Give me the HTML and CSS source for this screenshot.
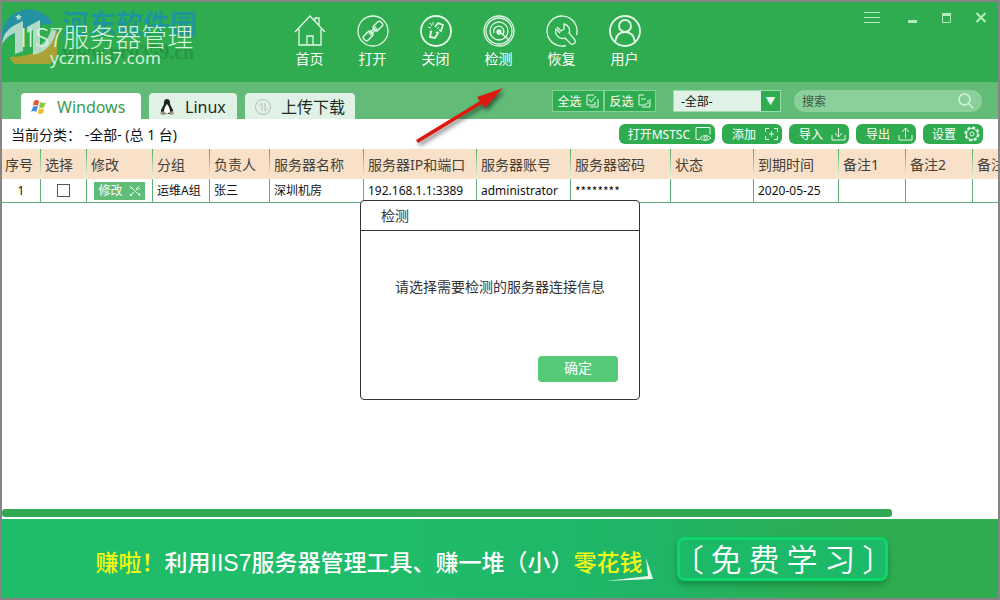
FILE: index.html
```
<!DOCTYPE html>
<html lang="zh-CN">
<head>
  <meta charset="UTF-8">
  <meta name="viewport" content="width=device-width, initial-scale=1.0">
  <title>IIS7服务器管理</title>
  <link rel="stylesheet" href="styles.css">
</head>
<body>
  <div class="window">
    <header class="header">
      <div class="brand">
        <h1>IIS7服务器管理</h1>
        <span class="brand-url">yczm.iis7.com</span>
      </div>
      <nav class="nav">
        <button>
          <svg viewBox="0 0 32 32"><path d="M1 17 16 1l15 16M5 14v16h22V14M13 30V21h6v9M21 6V3h4v7"/></svg>
          首页
        </button>
        <button>
          <svg viewBox="0 0 32 32"><circle cx="16" cy="16" r="15"/><g transform="rotate(-45 16 16)"><rect x="4" y="13" width="10" height="6" rx="2"/><rect x="18" y="13" width="10" height="6" rx="2"/><path d="M11 15h10M11 17h10"/></g></svg>
          打开
        </button>
        <button>
          <svg class="bold" viewBox="0 0 32 32"><circle cx="16" cy="16" r="15"/><path d="m15 12 3-4 5 2-2 6-2-1M10 17l2-1M16 17l2 1-3 5-5-1 1-5"/><path class="thin" d="M8 12l3 1M10 8l2 3M13 7v3M19 12l-2 2"/></svg>
          关闭
        </button>
        <button>
          <svg viewBox="0 0 32 32"><circle cx="16" cy="16" r="15"/><circle cx="16" cy="16" r="13"/><circle cx="16" cy="16" r="9"/><path d="M11 18a5 5 0 1 1 8 2M17 17l9 8"/><circle class="dot" cx="16" cy="17" r="2"/></svg>
          检测
        </button>
        <button>
          <svg viewBox="0 0 32 32"><path d="M20 30.500A15 15 0 1 1 30.500 20M11 12l4 4 3-2v-5a6.500 6.500 0 0 1 5 9l6 7a3 3 0 0 1-4 4l-6-6a7 7 0 0 1-9-9l4 4"/></svg>
          恢复
        </button>
        <button>
          <svg class="bold" viewBox="0 0 32 32"><circle cx="16" cy="16" r="15"/><circle cx="16" cy="11" r="6"/><path d="M6 27c1-6 4-10 10-10s9 4 10 10"/></svg>
          用户
        </button>
      </nav>
      <div class="controls">
        <button aria-label="菜单"><svg width="16" height="14"><path d="M0 3.500h16M0 8.500h16M0 13.500h16"/></svg></button>
        <button aria-label="最小化"><svg width="10" height="14"><path class="thick" d="M0 12.500h9"/></svg></button>
        <button aria-label="最大化"><svg width="10" height="14"><path d="M.5 5v8.500h8V5"/><path class="thick" d="M0 5.500h9"/></svg></button>
        <button aria-label="关闭窗口"><svg width="10" height="14"><path class="cross" d="m.5 4 9 9M9.500 4l-9 9"/></svg></button>
      </div>
    </header>

    <div class="tabbar">
      <div class="tabs">
        <button class="tab active">
          <svg width="18" height="18" viewBox="0 0 18 18"><path fill="#e2572f" d="M4 3q3-2 5 0L8 8Q5 6 3 8z"/><path fill="#8cc63e" d="M10 4q3 2 6 0l-2 5q-3 2-5 0z"/><path fill="#3f8fe0" d="M3 9q3-2 5 0l-2 5q-2-2-5 0z"/><path fill="#f7bd28" d="M9 10q2 2 5 0l-1 5q-3 2-5 0z"/></svg>
          Windows
        </button>
        <button class="tab">
          <svg width="18" height="18" viewBox="0 0 16 18"><path fill="#1c2420" d="M8 1c3 0 3 3 3 5l3 6v4H2v-4l3-6c0-2 0-5 3-5z"/><path fill="#fff" d="M8 6c2 2 3 5 3 8l-3 2-3-2c0-3 1-6 3-8z"/><path fill="#9b927d" d="m2 14 3-1 2 3-2 1-4-1zM14 13l1 3-4 1-1-3z"/></svg>
          Linux
        </button>
        <button class="tab">
          <svg width="18" height="18" viewBox="0 0 18 18" fill="none" stroke="#b5c0b8"><circle cx="9" cy="9" r="7.500"/><path d="M8 13V5L5 8M11 5v8l3-3"/></svg>
          上传下载
        </button>
      </div>
      <div class="filters">
        <div class="pick">
          <button>全选<svg width="13" height="14"><path d="M8 1H1v10h8V8M3 5l2 3 5-6M12 5v8H4"/></svg></button>
          <button>反选<svg width="13" height="14"><path d="M6 1H1v10h7V9M3 5h5M12 5v8H4M10 6v4"/></svg></button>
        </div>
        <div class="select">
          <select aria-label="分组"><option>-全部-</option></select>
        </div>
        <div class="search">
          <input type="text" placeholder="搜索" aria-label="搜索">
          <svg width="16" height="16"><circle cx="6.500" cy="6.500" r="5.500"/><path d="m11 11 4 4"/></svg>
        </div>
      </div>
    </div>

    <div class="toolbar">
      <span class="current">当前分类： -全部- (总 1 台)</span>
      <div class="actions">
        <button class="wide">打开MSTSC<svg width="17" height="14"><path d="M5 12.500H1V.5h14v7M5 11q5-5 11 0-6 5-11 0z"/><circle cx="10.500" cy="11" r="1.500"/></svg></button>
        <button>添加<svg width="15" height="14"><path d="M5 1.500H1.500V5M10 1.500h3.500V5M1.500 9v3.500H5M13.500 9v3.500H10M5 7h5M7.500 4.500v5"/></svg></button>
        <button>导入<svg width="15" height="14"><path d="M1 8v5h13V8M7.500 1v9M4 6l3.500 4L11 6"/></svg></button>
        <button>导出<svg width="15" height="14"><path d="M1 8v5h13V8M7.500 11V1M4 5l3.500-4L11 5"/></svg></button>
        <button>设置<svg width="16" height="16"><circle class="gear" cx="8" cy="8" r="6.500"/><circle cx="8" cy="8" r="5.500"/><circle cx="8" cy="8" r="2"/></svg></button>
      </div>
    </div>

    <main class="list">
      <table>
        <colgroup>
          <col class="c-no"><col class="c-check"><col class="c-edit"><col class="c-group"><col class="c-owner"><col class="c-name"><col class="c-ip"><col class="c-name"><col class="c-pwd"><col class="c-state"><col class="c-date"><col class="c-note"><col class="c-note"><col class="c-last">
        </colgroup>
        <thead>
          <tr>
            <th>序号</th><th>选择</th><th>修改</th><th>分组</th><th>负责人</th><th>服务器名称</th><th>服务器IP和端口</th><th>服务器账号</th><th>服务器密码</th><th>状态</th><th>到期时间</th><th>备注1</th><th>备注2</th><th>备注3</th>
          </tr>
        </thead>
        <tbody>
          <tr>
            <td class="center">1</td>
            <td class="center"><input type="checkbox" aria-label="选择深圳机房"></td>
            <td class="center"><button class="edit">修改<svg width="12" height="12"><path d="m2 2 9 9M10 1 7 4l1 1 3-2M1 11l4-4M1 1l2 3M1 9l2 2M10 8l1 2"/></svg></button></td>
            <td>运维A组</td>
            <td>张三</td>
            <td>深圳机房</td>
            <td>192.168.1.1:3389</td>
            <td>administrator</td>
            <td class="password">********</td>
            <td></td>
            <td>2020-05-25</td>
            <td></td>
            <td></td>
            <td></td>
          </tr>
        </tbody>
      </table>
    </main>
    <div class="scroll"><div class="thumb"></div></div>

    <footer class="banner">
      <p class="slogan">
        <em>赚啦！</em>利用IIS7服务器管理工具、赚一堆（小）<em>零花钱</em>
        <svg class="corner" width="48" height="24"><path d="m40 0 7 21L0 23l42-5z"/></svg>
      </p>
      <a class="learn" href="#">〔 免 费 学 习 〕</a>
    </footer>

    <div class="watermark">
      <svg width="56" height="58" viewBox="0 0 56 58">
        <path fill="#2590ad" d="M1 28A27 27 0 0 1 52 18Q25 18 1 36z"/>
        <path fill="#b8a233" d="M8 51Q42 52 55 24A27 27 0 0 1 8 51z"/>
        <path fill="#bfe0d2" d="M1 38Q2 26 12 20l10-5v30l-8 3V27Q7 29 1 38zM26 21l13-7v25q8-4 11-15 4-1 5 1-4 20-23 24V24l-6 3z"/>
        <path fill="#bfe0d2" d="m18 8 1 2h2l-2 2 1 2-2-1-2 1v-2l-2-2h2z"/>
      </svg>
      <div class="mark-text">
        <b>河东软件园</b>
        <span>www.pc0359.cn</span>
      </div>
    </div>

    <svg class="pointer" width="96" height="62">
      <path d="m4 54 64-39-3-4 26-9-18 20-3-4L6 57z"/>
    </svg>

    <div class="dialog" role="dialog" aria-labelledby="dialog-title">
      <h2 id="dialog-title">检测</h2>
      <p>请选择需要检测的服务器连接信息</p>
      <button>确定</button>
    </div>
  </div>
</body>
</html>
```

FILE: styles.css
```
* { box-sizing: border-box; }
body { margin: 0; font-family: "Noto Sans", "Noto Sans CJK SC", sans-serif; font-size: 14px; color: #111; }
button, input, select { font: inherit; color: inherit; }
button { padding: 0; border: none; background: none; cursor: pointer; white-space: nowrap; }
svg { flex: none; }
h1, h2, p { margin: 0; font-weight: normal; }

.window { position: relative; display: flex; flex-direction: column; min-height: 100vh; border: 2px solid #858585; background: #fff; overflow: hidden; }

/* header */
.header { display: flex; height: 80px; background: #2fac50; color: #fff; }
.brand { position: relative; z-index: 1; width: 276px; padding: 18px 0 0 18px; }
.brand h1 { font-family: "Noto Sans CJK SC", sans-serif; font-size: 26px; line-height: 32px; font-weight: 300; color: #d5f2da; white-space: nowrap; }
.brand-url { display: block; padding-left: 30px; font-size: 17px; line-height: 12px; color: #d5f2da; }
.nav { display: flex; }
.nav button { display: flex; flex-direction: column; align-items: center; gap: 2px; width: 63px; padding-top: 13px; line-height: 20px; justify-content: flex-start; }
.nav svg { width: 32px; height: 32px; fill: none; stroke: #e6f8e9; stroke-width: 1.3; }
.nav .bold { stroke-width: 1.8; }
.nav .thin { stroke-width: 1; }
.nav .dot { fill: #e6f8e9; }
.controls { display: flex; align-items: flex-start; gap: 24px; margin-left: auto; padding: 7px 12px 0 0; }
.controls button { display: block; height: 14px; }
.controls button:first-child { margin-right: 4px; }
.controls svg { display: block; fill: none; stroke: #b4edbd; }
.controls .thick { stroke-width: 3; }
.controls .cross { stroke-width: 2; }

/* tabs and filters */
.tabbar { display: flex; justify-content: space-between; height: 37px; background: #62bc78; }
.tabs { display: flex; align-items: flex-end; gap: 8px; padding-left: 19px; }
.tab { display: flex; align-items: center; gap: 9px; min-width: 88px; height: 26px; padding: 2px 10px 0 9px; border-radius: 4px 4px 0 0; background: #e0f2e5; font-size: 16px; line-height: 24px; color: #1f2b25; }
.tab.active { min-width: 120px; background: #fff; color: #3a9b52; }
.filters { display: flex; align-items: flex-start; padding: 8px 16px 0 0; }
.pick { display: flex; margin-right: 17px; }
.pick button { display: flex; align-items: center; justify-content: center; gap: 4px; width: 52px; height: 22px; border: 1px solid #82d092; background: #2fac50; color: #fff; font-size: 12px; }
.pick svg, .actions svg, .edit svg { fill: none; stroke: #e6f8e9; }
.select { position: relative; width: 108px; margin-right: 13px; }
.select select { appearance: none; display: block; width: 100%; height: 22px; padding: 0 7px; border: 1px solid #9ddbaa; border-radius: 0; background: #e0f2e5; font-size: 12px; }
.select::after { content: "▼"; position: absolute; top: 1px; right: 1px; width: 19px; height: 20px; background: #2fac50; color: #e6f8e9; font-size: 10px; line-height: 20px; text-align: center; pointer-events: none; }
.search { display: flex; align-items: center; width: 188px; height: 22px; padding: 0 8px; border-radius: 11px; background: #8bcf9b; }
.search input { flex: 1; min-width: 0; padding: 0; border: none; outline: none; background: none; font-size: 12px; }
.search input::placeholder { color: #3c5a45; opacity: 1; }
.search svg { fill: none; stroke: #d5f2da; stroke-width: 1.5; }

.toolbar { display: flex; align-items: center; justify-content: space-between; height: 30px; padding: 0 15px 0 9px; }
.actions { display: flex; gap: 7px; }
.actions button { display: flex; align-items: center; justify-content: flex-end; gap: 8px; width: 60px; height: 20px; padding-right: 3px; border-radius: 6px; background: #2fac50; color: #fff; font-size: 12px; }
.actions .wide { width: 96px; gap: 5px; }
.gear { stroke-width: 2; stroke-dasharray: 3 2; }

/* server list */
.list { flex: 1; overflow: hidden; }
table { width: 1115px; table-layout: fixed; border-collapse: separate; border-spacing: 0; }
th, td { padding: 0 0 0 5px; text-align: left; white-space: nowrap; }
th { height: 30px; background: linear-gradient(#4ba867, #f5f5df) left / 1px 100% no-repeat #f8e0c9; font-weight: normal; font-size: 14px; color: #464036; }
th:first-child { padding-left: 3px; background: #f8e0c9; }
td { height: 24px; padding-left: 4px; border-left: 1px solid #62b078; border-bottom: 1px solid #62b078; font-size: 12px; line-height: 20px; }
td:first-child { border-left: none; }
td.center { padding: 0; text-align: center; }
td.password { font-family: "Noto Sans CJK SC", sans-serif; }
td input { appearance: none; display: block; width: 13px; height: 13px; margin: 0 auto; border: 1px solid #555; background: #fff; }
td input:checked { background: #2fac50; }
.edit { display: flex; align-items: center; justify-content: center; gap: 6px; width: 51px; height: 18px; margin: 0 auto; background: #5fbd77; color: #fff; font-size: 12px; }
.c-no { width: 38px; }
.c-check { width: 46px; }
.c-edit { width: 66px; }
.c-group { width: 57px; }
.c-owner { width: 60px; }
.c-name { width: 94px; }
.c-ip { width: 113px; }
.c-pwd { width: 100px; }
.c-state { width: 83px; }
.c-date { width: 85px; }
.c-note { width: 67px; }
.c-last { width: 145px; }

.scroll { height: 10px; }
.thumb { width: 89.4%; height: 8px; border-radius: 3px; background: #33a852; }

/* banner */
.banner { display: flex; align-items: center; justify-content: center; gap: 35px; height: 79px; padding-right: 16px; background: linear-gradient(90deg, #1fbd6a 35%, #1fb568 65%, #2fac50 85%); }
.slogan { position: relative; padding-top: 8px; font-family: "Liberation Sans", "Noto Sans CJK SC", sans-serif; font-size: 23px; line-height: 32px; font-weight: 500; color: #fff; white-space: nowrap; }
.slogan em { font-style: normal; color: #f3f814; }
.corner { position: absolute; right: -12px; bottom: -3px; fill: #e6f8e9; }
.learn { display: flex; align-items: center; justify-content: center; width: 211px; height: 44px; padding-bottom: 2px; border: 3px solid #0cd56c; border-radius: 8px; background: #1cb968; box-shadow: 0 4px 6px rgba(0, 90, 30, 0.4); font-family: "Noto Sans CJK SC", sans-serif; font-feature-settings: "halt"; font-size: 31px; line-height: 36px; font-weight: 350; color: #fff; text-decoration: none; white-space: nowrap; }

/* overlays */
.watermark { position: absolute; top: 4px; left: -1px; display: flex; gap: 5px; pointer-events: none; }
.watermark svg { opacity: 0.9; }
.mark-text { display: flex; flex-direction: column; white-space: nowrap; }
.mark-text b { font-size: 27px; line-height: 36px; color: rgba(22, 140, 190, 0.7); }
.mark-text span { font-family: "Liberation Serif", serif; font-size: 20px; line-height: 20px; font-weight: bold; color: rgba(30, 130, 50, 0.5); }
.pointer { position: absolute; top: 84px; left: 410px; fill: #dc1a12; filter: drop-shadow(2px 3px 2px rgba(0, 0, 0, 0.5)); pointer-events: none; }

.dialog { position: absolute; top: 50%; left: 50%; transform: translate(-50%, -50%); display: flex; flex-direction: column; width: 280px; height: 200px; border: 1px solid #333; border-radius: 4px; background: #fff; color: #333; }
.dialog h2 { height: 30px; padding-left: 20px; border-bottom: 1px solid #333; font-size: 14px; line-height: 29px; }
.dialog p { flex: 1; padding-top: 45px; text-align: center; line-height: 22px; }
.dialog button { align-self: flex-end; width: 80px; height: 26px; margin: 0 21px 17px 0; padding-bottom: 3px; border-radius: 4px; background: #56cb77; color: #fff; line-height: 22px; }
```
